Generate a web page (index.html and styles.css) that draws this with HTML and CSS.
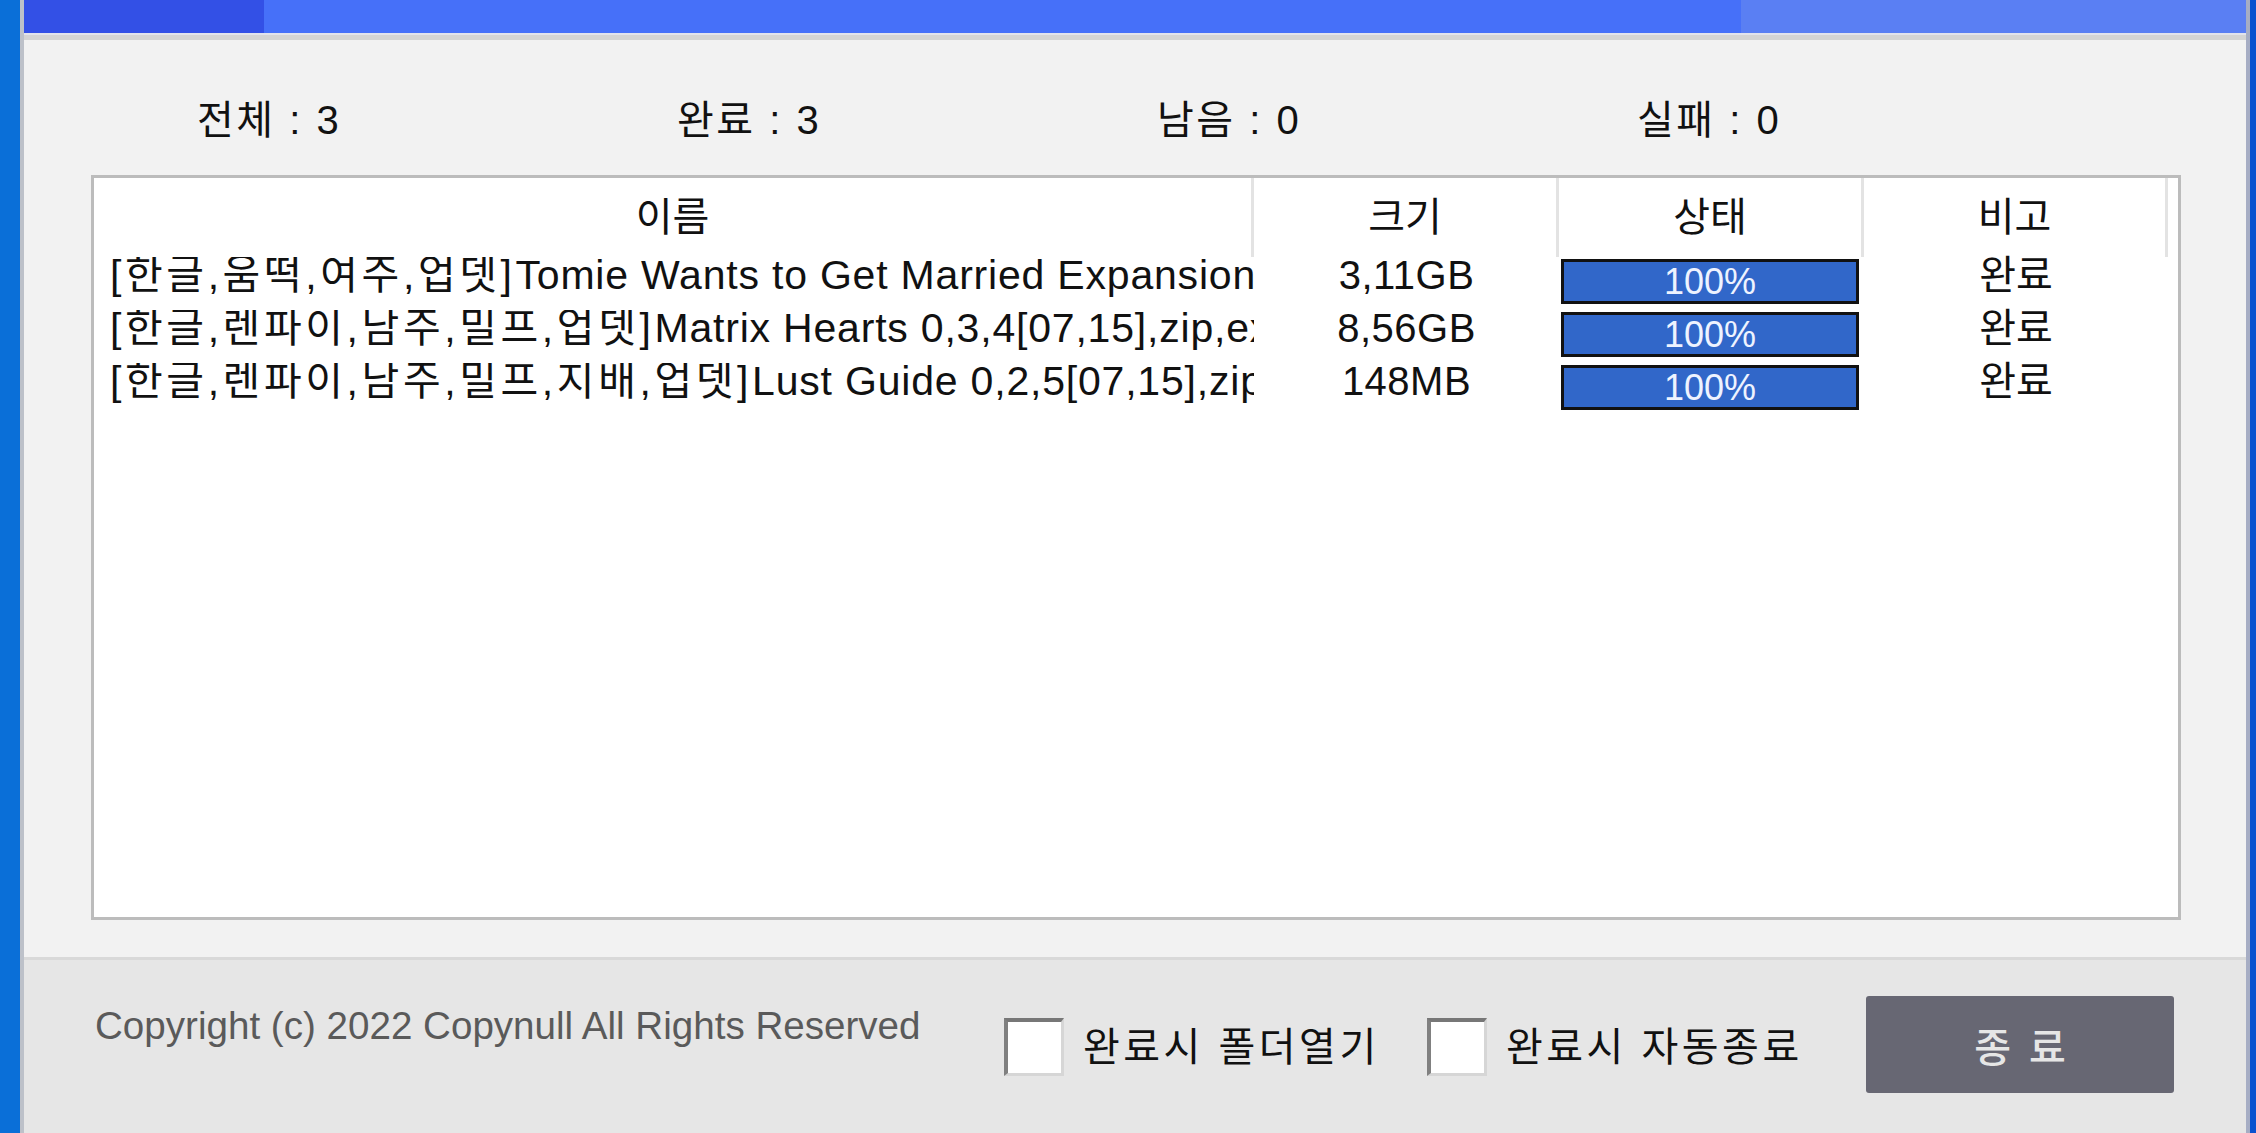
FILE: index.html
```html
<!DOCTYPE html>
<html lang="ko">
<head>
<meta charset="utf-8">
<title>다운로드</title>
<link rel="stylesheet" href="styles.css">
</head>
<body>
<div class="desk-left"></div>
<div class="window">
  <div class="titlebar">
    <div class="seg-dark"></div>
    <div class="seg-main"></div>
    <div class="seg-light"></div>
  </div>
  <div class="title-line"></div>
  <div class="title-band"></div>
  <div class="main">
    <div class="stats">
      <div class="stat">전체 : 3</div>
      <div class="stat">완료 : 3</div>
      <div class="stat">남음 : 0</div>
      <div class="stat">실패 : 0</div>
    </div>
    <div class="list">
      <div class="list-head">
        <div class="h h-name">이름</div>
        <div class="h h-size">크기</div>
        <div class="h h-status">상태</div>
        <div class="h h-note">비고</div>
        <div class="h-rest"></div>
      </div>
      <div class="row">
        <div class="c-name"><span class="tag">[한글,움떡,여주,업뎃]</span>Tomie Wants to Get Married Expansion</div>
        <div class="c-size">3,11GB</div>
        <div class="c-status"><div class="bar">100%</div></div>
        <div class="c-note">완료</div>
      </div>
      <div class="row">
        <div class="c-name"><span class="tag">[한글,렌파이,남주,밀프,업뎃]</span>Matrix Hearts 0,3,4[07,15],zip,ex</div>
        <div class="c-size">8,56GB</div>
        <div class="c-status"><div class="bar">100%</div></div>
        <div class="c-note">완료</div>
      </div>
      <div class="row">
        <div class="c-name"><span class="tag">[한글,렌파이,남주,밀프,지배,업뎃]</span>Lust Guide 0,2,5[07,15],zip</div>
        <div class="c-size">148MB</div>
        <div class="c-status"><div class="bar">100%</div></div>
        <div class="c-note">완료</div>
      </div>
    </div>
  </div>
  <div class="divider"></div>
  <div class="footer">
    <div class="copy">Copyright (c) 2022 Copynull All Rights Reserved</div>
    <label class="opt opt1"><span class="cb"></span><span class="opt-label">완료시 폴더열기</span></label>
    <label class="opt opt2"><span class="cb"></span><span class="opt-label">완료시 자동종료</span></label>
    <div class="btn">종료</div>
  </div>
</div>
<div class="desk-right"></div>
</body>
</html>
```

FILE: styles.css
```css
html, body {
  margin: 0;
  padding: 0;
}
body {
  width: 2256px;
  height: 1133px;
  overflow: hidden;
  display: flex;
  font-family: "Liberation Sans", "Noto Sans CJK KR", sans-serif;
  color: #111;
}
.desk-left {
  width: 20px;
  background: #0a6fd8;
}
.desk-right {
  flex: 1;
  background: #0a52cf;
}
.window {
  width: 2230px;
  box-sizing: border-box;
  border-left: 4px solid #bdc1c9;
  border-right: 4px solid #a6adc4;
  display: flex;
  flex-direction: column;
  background: #f2f2f2;
}
.titlebar {
  height: 33px;
  display: flex;
}
.seg-dark {
  width: 240px;
  background: #3350e6;
}
.seg-main {
  width: 1477px;
  background: #4670f9;
}
.seg-light {
  flex: 1;
  background: #5a7ff3;
}
.title-line {
  height: 2px;
  background: #e2e3ec;
}
.title-band {
  height: 5px;
  background: #d4d4d4;
}
.main {
  height: 917px;
  display: flex;
  flex-direction: column;
}
.stats {
  display: flex;
  padding: 60px 0 0 173px;
  height: 40px;
}
.stat {
  width: 480px;
  font-size: 40px;
  line-height: 40px;
  letter-spacing: 2.5px;
  white-space: nowrap;
}
.list {
  margin: 35px 65px 0 67px;
  height: 745px;
  box-sizing: border-box;
  border: 3px solid #bcbcbc;
  background: #fff;
}
.list-head {
  display: flex;
  height: 79px;
}
.h {
  box-sizing: border-box;
  border-right: 3px solid #e3e3e3;
  text-align: center;
  font-size: 40px;
  line-height: 79px;
}
.h-name { width: 1160px; }
.h-size { width: 305px; }
.h-status { width: 305px; }
.h-note { width: 304px; }
.h-rest { flex: 1; }
.row {
  display: flex;
  height: 53px;
  font-size: 40px;
}
.c-name {
  width: 1160px;
  box-sizing: border-box;
  padding: 0 3px 0 16px;
  overflow: hidden;
  white-space: nowrap;
  font-size: 41px;
  letter-spacing: 0.8px;
  line-height: 36px;
}
.tag {
  letter-spacing: 3.6px;
}
.c-size {
  width: 305px;
  text-align: center;
  line-height: 36px;
  letter-spacing: 0.5px;
  white-space: nowrap;
}
.c-status {
  width: 305px;
  box-sizing: border-box;
  padding: 2px 0 0 2px;
}
.bar {
  width: 298px;
  height: 45px;
  box-sizing: border-box;
  border: 3px solid #111;
  background: #3167c9;
  color: #eef3ff;
  text-align: center;
  font-size: 36px;
  line-height: 39px;
}
.c-note {
  width: 304px;
  text-align: center;
  line-height: 36px;
}
.divider {
  height: 3px;
  background: #d9d9d9;
}
.footer {
  flex: 1;
  display: flex;
  align-items: flex-start;
  padding-left: 71px;
  background: #e6e6e6;
}
.copy {
  flex: 1;
  margin-top: 44px;
  font-size: 38.6px;
  line-height: 44px;
  color: #5a5a5a;
  white-space: nowrap;
}
.opt {
  display: flex;
  align-items: center;
  margin-top: 58px;
}
.opt1 { width: 423px; }
.opt2 { width: 439px; }
.cb {
  width: 60px;
  height: 58px;
  box-sizing: border-box;
  background: #fff;
  border-top: 4px solid #777;
  border-left: 4px solid #808080;
  border-right: 3px solid #d6d6d6;
  border-bottom: 3px solid #d6d6d6;
  margin-right: 19px;
  flex: none;
}
.opt-label {
  font-size: 40px;
  line-height: 58px;
  letter-spacing: 3.5px;
  white-space: nowrap;
}
.btn {
  width: 308px;
  height: 97px;
  margin-top: 36px;
  margin-right: 72px;
  box-sizing: border-box;
  padding-left: 18px;
  background: #676773;
  border-radius: 3px;
  color: #e6e6e6;
  font-family: "Noto Sans CJK KR", sans-serif;
  font-weight: 500;
  font-size: 40px;
  letter-spacing: 18px;
  display: flex;
  align-items: center;
  justify-content: center;
}
```
